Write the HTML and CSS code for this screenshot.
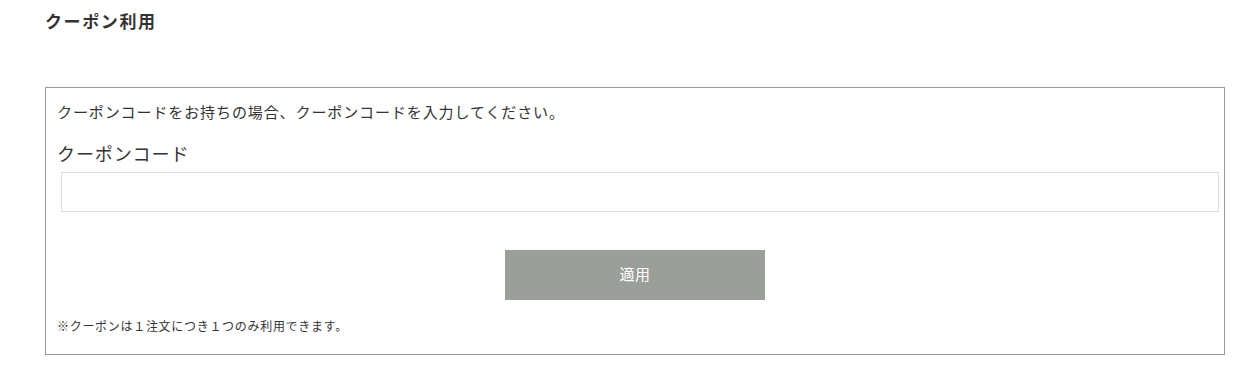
FILE: index.html
```html
<!DOCTYPE html>
<html lang="ja">
<head>
<meta charset="utf-8">
<link rel="stylesheet" href="styles.css">
</head>
<body>
<div class="page">
  <h2 class="title">クーポン利用</h2>
  <div class="coupon-box">
    <p class="intro">クーポンコードをお持ちの場合、クーポンコードを入力してください。</p>
    <label class="label" for="code">クーポンコード</label>
    <input class="code-input" id="code" type="text">
    <div class="actions">
      <button class="apply" type="button">適用</button>
    </div>
    <p class="note">※クーポンは１注文につき１つのみ利用できます。</p>
  </div>
</div>
</body>
</html>
```
FILE: styles.css
```css
html, body {
  margin: 0;
  padding: 0;
  background: #fff;
}
body {
  font-family: "Noto Sans CJK JP", "Noto Sans", sans-serif;
  color: #333;
}
.page {
  padding: 0 30px 0 45px;
}
.title {
  margin: 0;
  padding-top: 9px;
  font-size: 17px;
  font-weight: bold;
  line-height: 24px;
  letter-spacing: 1.6px;
  color: #333;
}
.coupon-box {
  margin-top: 54px;
  border: 1px solid #999;
  padding: 12px 5px 18px 11px;
  display: flex;
  flex-direction: column;
}
.intro {
  margin: 0;
  font-size: 15px;
  line-height: 24px;
  letter-spacing: 0.9px;
}
.label {
  margin-top: 16px;
  font-size: 18px;
  line-height: 26px;
  letter-spacing: 0.9px;
  color: #333;
}
.code-input {
  margin: 6px 0 0 4px;
  height: 40px;
  box-sizing: border-box;
  border: 1px solid #ddd;
  outline: none;
  font-size: 14px;
}
.actions {
  display: flex;
  justify-content: center;
  margin-top: 38px;
  padding-right: 6px;
}
.apply {
  width: 260px;
  height: 50px;
  padding: 0 0 4px;
  background: #9a9f99;
  border: none;
  color: #fff;
  font-family: inherit;
  font-size: 15px;
  letter-spacing: 0.5px;
}
.note {
  margin: 16px 0 0;
  font-size: 12px;
  line-height: 20px;
  letter-spacing: 0.7px;
}
```
